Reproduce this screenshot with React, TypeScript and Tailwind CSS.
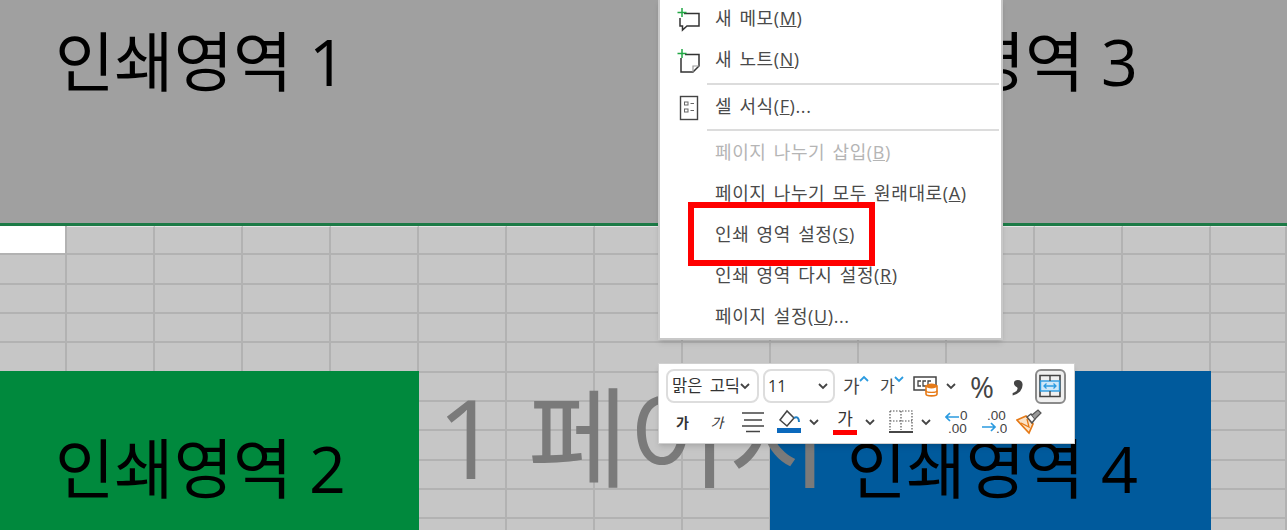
import React from 'react';

const rowCount = 11;
const colCount = 15;

const Chevron = ({ color = '#444444', up = false }: { color?: string; up?: boolean }) => (
  <svg width="12" height="8" viewBox="0 0 12 8" fill="none" stroke={color} strokeWidth="1.8">
    <path d={up ? 'M2 6 L6 2 L10 6' : 'M2 2 L6 6 L10 2'} />
  </svg>
);

const MemoIcon = () => (
  <svg width="26" height="26" viewBox="0 0 26 26" fill="none">
    <path d="M8 6.5 H23 V19 H11 L6.5 23 V19 H4 V11" stroke="#333333" strokeWidth="1.5" />
    <path d="M6 1 V10 M1.5 5.5 H10.5" stroke="#22a845" strokeWidth="1.5" />
  </svg>
);

const NoteIcon = () => (
  <svg width="26" height="26" viewBox="0 0 26 26" fill="none">
    <path d="M9 6.5 H23 V18 L17 24 H5 V10" stroke="#333333" strokeWidth="1.5" />
    <path d="M23 18 H17 V24" stroke="#999999" strokeWidth="1.2" />
    <path d="M6 1 V10 M1.5 5.5 H10.5" stroke="#22a845" strokeWidth="1.5" />
  </svg>
);

const CellFormatIcon = () => (
  <svg width="20" height="26" viewBox="0 0 20 26" fill="none">
    <rect x="1.5" y="1.5" width="17" height="23" stroke="#444444" strokeWidth="1.4" />
    <rect x="5.5" y="7" width="3.5" height="3" stroke="#666666" />
    <rect x="5.5" y="14" width="3.5" height="3" stroke="#666666" />
    <path d="M11.5 8.5 H15 M11.5 15.5 H15" stroke="#666666" />
  </svg>
);

const AlignIcon = () => (
  <svg width="24" height="22" viewBox="0 0 24 22" stroke="#444444" strokeWidth="1.5">
    <path d="M1 2 H23 M3 9 H21 M1 15 H23 M5 20.5 H19" />
  </svg>
);

const FillIcon = () => (
  <svg width="26" height="26" viewBox="0 0 26 26" fill="none">
    <path d="M11 2 L4 11 L11 17 L18 9 Z" stroke="#444444" strokeWidth="1.5" />
    <path d="M18 9 C21 7 23 9 23 13" stroke="#1f7fc4" strokeWidth="2" />
    <rect x="1" y="19" width="24" height="5" fill="#0b69bd" />
  </svg>
);

const FormatIcon = () => (
  <svg width="26" height="22" viewBox="0 0 26 22" fill="none">
    <rect x="1" y="2" width="22" height="13" stroke="#444444" strokeWidth="1.5" />
    <path d="M8 6 H5 V11 H8 M13 6 H10 V11 H13 M18 6 H15 V11 H18" stroke="#444444" strokeWidth="1.3" />
    <path d="M13 11 V19 C13 21.5 24 21.5 24 19 V11 Z" fill="#ffffff" stroke="#e67a17" strokeWidth="1.6" />
    <ellipse cx="18.5" cy="11" rx="5.5" ry="2.5" fill="#e67a17" />
    <path d="M13 15.5 C13 18 24 18 24 15.5" stroke="#e67a17" strokeWidth="1.4" />
  </svg>
);

const ShrinkIcon = () => (
  <svg width="22" height="24" viewBox="0 0 22 24" fill="none">
    <path d="M1 1.5 H21 V22.5 H1 Z" stroke="#444444" strokeWidth="1.6" />
    <rect x="1.5" y="7" width="19" height="10" fill="#cfe8f8" stroke="#2b9be0" strokeWidth="1.4" />
    <path d="M11 1.5 V7 M11 17 V22.5" stroke="#444444" strokeWidth="1.4" />
    <path d="M5 12 H17 M7.5 9.5 L5 12 L7.5 14.5 M14.5 9.5 L17 12 L14.5 14.5" stroke="#2b9be0" strokeWidth="1.3" />
  </svg>
);

const BorderIcon = () => (
  <svg width="24" height="24" viewBox="0 0 24 24" fill="none">
    <path d="M1 1 H23 V20 M1 1 V20 M12 1 V20 M1 11 H23" stroke="#555555" strokeWidth="1.2" strokeDasharray="1.5 1.5" />
    <path d="M0 22 H24" stroke="#333333" strokeWidth="1.8" />
  </svg>
);

const DecimalIcon = ({ increase = false }: { increase?: boolean }) => (
  <svg width="26" height="30" viewBox="0 0 26 30" fill="none">
    <text
      x={increase ? 6 : 15}
      y="13"
      fontSize="13.5"
      fill="#444444"
      fontFamily="'Liberation Sans', sans-serif"
    >
      {increase ? '.00' : '0'}
    </text>
    <text
      x={increase ? 15 : 3}
      y="26"
      fontSize="13.5"
      fill="#444444"
      fontFamily="'Liberation Sans', sans-serif"
    >
      {increase ? '.0' : '.00'}
    </text>
    {increase ? (
      <path d="M1 20 H14 M10 16 L14 20 L10 24" stroke="#2b9be0" strokeWidth="1.7" />
    ) : (
      <path d="M14 10 H1 M5 6 L1 10 L5 14" stroke="#2b9be0" strokeWidth="1.7" />
    )}
  </svg>
);

const BrushIcon = () => (
  <svg width="26" height="26" viewBox="0 0 26 26" fill="none">
    <path d="M1 11 L10 7 L17 15 L13 24 Z" fill="#fbe3c8" stroke="#e67a17" strokeWidth="1.7" />
    <path d="M5 14 L13 18 L11 10" stroke="#e67a17" strokeWidth="1.3" />
    <path d="M11 8 L15 5 L19 10 L16 14 Z" fill="#ffffff" stroke="#555555" strokeWidth="1.5" />
    <path d="M16 6 L22 1 L25 4 L19 10" fill="#999999" stroke="#555555" strokeWidth="1.2" />
  </svg>
);

const Item = ({
  label,
  hotkey,
  suffix = '',
  icon,
  disabled = false,
}: {
  label: string;
  hotkey: string;
  suffix?: string;
  icon?: React.ReactNode;
  disabled?: boolean;
}) => (
  <div
    className={`flex h-[41px] items-center text-[18px] tracking-[0.6px] [word-spacing:2px] ${
      disabled ? 'text-[#b5b5b5]' : 'text-[#4a4a4a]'
    }`}
  >
    <div className="flex w-[55px] justify-center pl-[2px]">{icon}</div>
    <span className="-translate-y-px">
      {label}(<span className="underline">{hotkey}</span>){suffix}
    </span>
  </div>
);

const Separator = ({ className = 'my-[2px]' }: { className?: string }) => (
  <div className={`ml-[47px] mr-[2px] h-[2px] bg-[#dcdcdc] ${className}`} />
);

export default function App() {
  const cells = Array.from({ length: rowCount * colCount });

  return (
    <div className="relative flex h-[530px] w-[1287px] flex-col overflow-hidden bg-[#c6c6c6] font-['Open_Sans','Noto_Sans_CJK_KR',sans-serif]">
      {/* Print areas on top */}
      <div className="grid h-[226px] shrink-0 grid-cols-[770px_1fr] border-b-[3px] border-[#1c7a46] bg-[#a0a0a0] text-[64.5px] leading-none text-black">
        <div className="pl-[55px] pt-[29px]">인쇄영역 1</div>
        <div className="pl-[77px] pt-[29px]">인쇄영역 3</div>
      </div>

      {/* Sheet cells */}
      <div className="relative grid grid-cols-[67px_repeat(13,88px)_1fr] auto-rows-[29.35px]">
        {cells.map((_, i) => (
          <div
            key={i}
            className={`border-b-2 border-r-2 border-[#b2b2b2] ${i === 0 ? 'bg-white' : ''} ${
              i > 0 && i < colCount ? 'border-t border-t-[#e6e6e6]' : ''
            }`}
          />
        ))}
        <div className="absolute left-0 top-[145px] flex h-[160px] w-[419px] items-center bg-[#00893d] pl-[55px] pt-[34px] text-[64.5px] leading-none text-black">
          인쇄영역 2
        </div>
        <div className="absolute left-[770px] top-[145px] flex h-[160px] w-[441px] items-center bg-[#005a9c] pl-[77px] pt-[34px] text-[64.5px] leading-none text-black">
          인쇄영역 4
        </div>
      </div>

      {/* Page watermark */}
      <div className="absolute left-[437px] top-[382px] whitespace-nowrap text-[109px] leading-none text-[#7a7a7a]">
        1 페이지
      </div>

      {/* Context menu */}
      <div className="absolute left-[658px] top-[-1px] h-[341px] w-[345px] border-2 border-t-0 border-[#c8c8c8] bg-white shadow-md">
        <Item label="새 메모" hotkey="M" icon={<MemoIcon />} />
        <Item label="새 노트" hotkey="N" icon={<NoteIcon />} />
        <Separator />
        <Item label="셀 서식" hotkey="F" suffix="..." icon={<CellFormatIcon />} />
        <Separator className="mb-[2px] mt-[1px]" />
        <Item label="페이지 나누기 삽입" hotkey="B" disabled />
        <Item label="페이지 나누기 모두 원래대로" hotkey="A" />
        <Item label="인쇄 영역 설정" hotkey="S" />
        <Item label="인쇄 영역 다시 설정" hotkey="R" />
        <Item label="페이지 설정" hotkey="U" suffix="..." />
      </div>

      {/* Red highlight */}
      <div className="absolute left-[688px] top-[202px] h-[64px] w-[187px] border-[6px] border-[#ff0000]" />

      {/* Mini toolbar */}
      <div className="absolute left-[658px] top-[363px] h-[81px] w-[417px] border border-[#d0d0d0] bg-white pl-[7px] pt-[4px] shadow-md">
        <div className="flex h-[36px] items-center">
          <div className="flex h-[34px] w-[93px] items-center rounded-lg border-2 border-[#dddddd] pl-[4px] text-[16.5px] text-[#333333]">
            <span className="w-[67px] shrink-0 overflow-hidden whitespace-nowrap [word-spacing:3px]">맑은 고딕</span>
            <Chevron />
          </div>
          <div className="ml-[4px] flex h-[34px] w-[72px] items-center justify-between rounded-lg border-2 border-[#dddddd] pl-[3px] pr-[4px] text-[16px] text-[#333333]">
            <span>11</span>
            <Chevron />
          </div>
          <div className="relative ml-[8px] w-[27px] text-[18px] text-[#444444]">
            가
            <div className="absolute right-0 top-[2px]">
              <Chevron color="#2b9be0" up />
            </div>
          </div>
          <div className="relative ml-[10px] w-[25px] text-[16px] text-[#444444]">
            가
            <div className="absolute right-0 top-[1px]">
              <Chevron color="#2b9be0" />
            </div>
          </div>
          <div className="ml-[8px]">
            <FormatIcon />
          </div>
          <div className="ml-[6px]">
            <Chevron />
          </div>
          <div className="ml-[13px] font-['Open_Sans',sans-serif] text-[29px] leading-none text-[#444444]">%</div>
          <div className="ml-[18px] w-[12px] pb-[32px] font-['Liberation_Serif',serif] text-[50px] font-bold leading-none text-[#444444]">
            ,
          </div>
          <div className="ml-[11px] flex h-[35px] w-[31px] items-center justify-center rounded-md border-2 border-[#8a8a8a] bg-[#f0f0f0]">
            <ShrinkIcon />
          </div>
        </div>
        <div className="flex h-[36px] items-center text-[#333333]">
          <div className="w-[33px] text-center text-[14px] font-bold">가</div>
          <div className="w-[36px] text-center text-[14px] italic">가</div>
          <div className="ml-[6px] flex w-[24px] justify-center">
            <AlignIcon />
          </div>
          <div className="ml-[11px]">
            <FillIcon />
          </div>
          <div className="ml-[6px]">
            <Chevron />
          </div>
          <div className="ml-[13px] flex w-[24px] flex-col items-center leading-none">
            <span className="text-[17px]">가</span>
            <span className="mt-[3px] h-[5px] w-[24px] bg-[#ff0000]" />
          </div>
          <div className="ml-[7px]">
            <Chevron />
          </div>
          <div className="ml-[13px]">
            <BorderIcon />
          </div>
          <div className="ml-[7px]">
            <Chevron />
          </div>
          <div className="ml-[13px]">
            <DecimalIcon />
          </div>
          <div className="ml-[10px]">
            <DecimalIcon increase />
          </div>
          <div className="ml-[9px]">
            <BrushIcon />
          </div>
        </div>
      </div>
    </div>
  );
}
